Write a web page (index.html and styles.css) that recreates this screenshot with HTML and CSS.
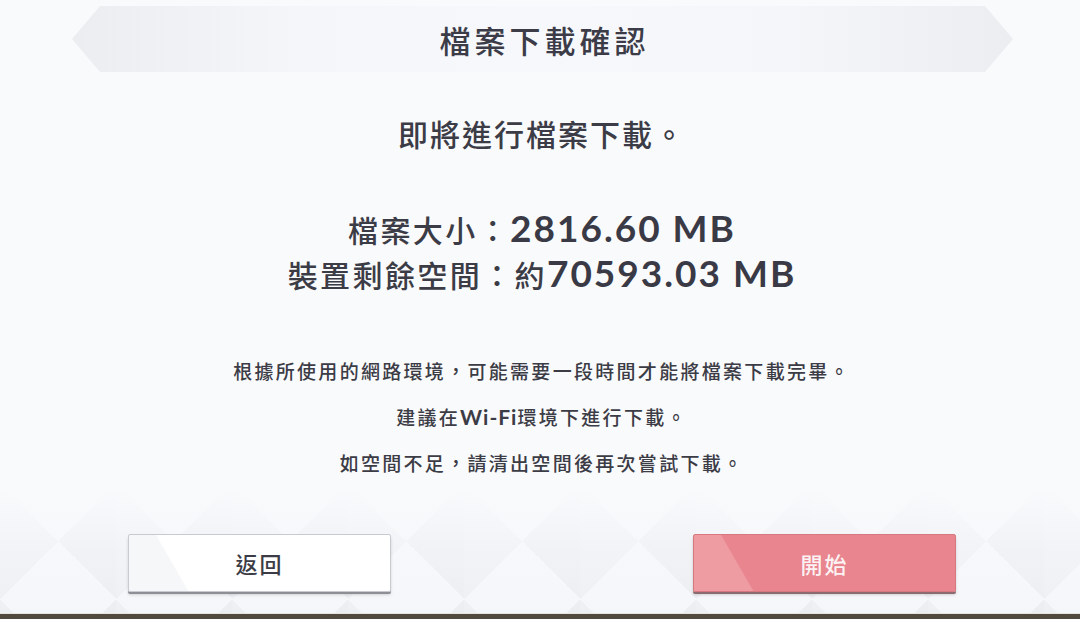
FILE: index.html
```html
<!DOCTYPE html>
<html lang="zh-Hant">
  <head>
    <meta charset="UTF-8" />
    <meta name="viewport" content="width=device-width, initial-scale=1.0" />
    <title>檔案下載確認</title>
    <link rel="stylesheet" href="styles.css">
  </head>
  <body>
    <div class="screen">
      <div class="banner">
        <h1>檔案下載確認</h1>
      </div>

      <div class="content">
        <p class="lead">即將進行檔案下載。</p>

        <div class="sizes">
          <p>檔案大小：<span class="num">2816.60 MB</span></p>
          <p>裝置剩餘空間：約<span class="num">70593.03 MB</span></p>
        </div>

        <div class="notes">
          <p>根據所使用的網路環境，可能需要一段時間才能將檔案下載完畢。</p>
          <p>建議在<span class="latin">Wi-Fi</span>環境下進行下載。</p>
          <p>如空間不足，請清出空間後再次嘗試下載。</p>
        </div>
      </div>

      <div class="actions">
        <button class="btn btn-back" onclick="goBack()">返回</button>
        <button class="btn btn-start" onclick="startDownload()">開始</button>
      </div>
      <div class="bar"></div>
    </div>

    <script>
      function goBack() {
        console.log('back');
      }

      function startDownload() {
        console.log('start download');
      }
    </script>
  </body>
</html>
```

FILE: styles.css
```css
body {
  margin: 0;
  font-family: "Noto Sans CJK TC", "Noto Sans", sans-serif;
  color: #3c3c46;
  background-color: #f9fafc;
}
p {
  margin: 0;
}
.screen {
  width: 1080px;
  height: 619px;
  display: flex;
  flex-direction: column;
  overflow: hidden;
}

/* title ribbon with pointed ends */
.banner {
  margin: 6px 67px 0 72px;
  height: 66px;
  display: flex;
  align-items: center;
  justify-content: center;
  background: linear-gradient(to right, #ecedf1, #f5f6f9 25%, #f7f8fb 50%, #f5f6f9 75%, #ecedf1);
  clip-path: polygon(28px 0, calc(100% - 28px) 0, 100% 50%, calc(100% - 28px) 100%, 28px 100%, 0 50%);
}
.banner h1 {
  margin: 0;
  padding-left: 4px;
  font-size: 31px;
  font-weight: 500;
  letter-spacing: 4px;
  color: #3c3c48;
}

.content {
  text-align: center;
  padding-left: 4px;
}
.lead {
  margin-top: 41px;
  font-size: 30px;
  line-height: 40px;
  font-weight: 500;
  letter-spacing: 2px;
}
.sizes {
  margin-top: 53px;
  font-size: 30px;
  font-weight: 500;
  line-height: 44px;
  letter-spacing: 2.4px;
}
.num {
  font-family: Lato, "Noto Sans", sans-serif;
  font-size: 37px;
  font-weight: 700;
  letter-spacing: 2px;
  color: #3a3a46;
}
.notes {
  margin-top: 52px;
  font-size: 19px;
  font-weight: 500;
  letter-spacing: 2.3px;
}
.notes p {
  line-height: 46px;
}
.latin {
  font-family: Lato, "Noto Sans", sans-serif;
  font-size: 21px;
  font-weight: 700;
  letter-spacing: 1px;
}

/* bottom area with diamond pattern */
.actions {
  margin-top: auto;
  height: 124px;
  box-sizing: border-box;
  padding: 45px 0 0 4px;
  display: flex;
  justify-content: center;
  gap: 302px;
  background:
    linear-gradient(to bottom, #f9fafc 0%, rgba(249, 250, 252, 0.6) 45%, rgba(249, 250, 252, 0.3) 100%),
    conic-gradient(from 45deg at 50% 50%, #e6e8ed 90deg, #f4f5f8 90deg 180deg, #e9ebf0 180deg 270deg, #f4f5f8 270deg);
  background-size: auto, 116px 116px;
  background-position: 0 0, 0 -6px;
}
.btn {
  width: 263px;
  height: 58px;
  font-family: "Noto Sans CJK TC", sans-serif;
  font-size: 22px;
  font-weight: 500;
  letter-spacing: 2px;
  border-radius: 2px;
  cursor: pointer;
}
.btn-back {
  color: #3c3c46;
  border: 1px solid #c9cacf;
  background: linear-gradient(60deg, #f6f7f9 0%, #f6f7f9 20%, #ffffff 20.5%, #ffffff 100%);
  box-shadow: 0 2px 0 #8e8f95, 0 3px 3px rgba(0, 0, 0, 0.15);
}
.btn-start {
  color: #fdf2f3;
  border: 1px solid #d77880;
  background: linear-gradient(60deg, #ee9ba2 0%, #ee9ba2 20%, #e8858e 20.5%, #e8858e 100%);
  box-shadow: 0 2px 0 #8c6b70, 0 3px 3px rgba(0, 0, 0, 0.15);
}
.bar {
  height: 5px;
  border-top: 1px solid #e6e4de;
  background-color: #514b3f;
}
```
